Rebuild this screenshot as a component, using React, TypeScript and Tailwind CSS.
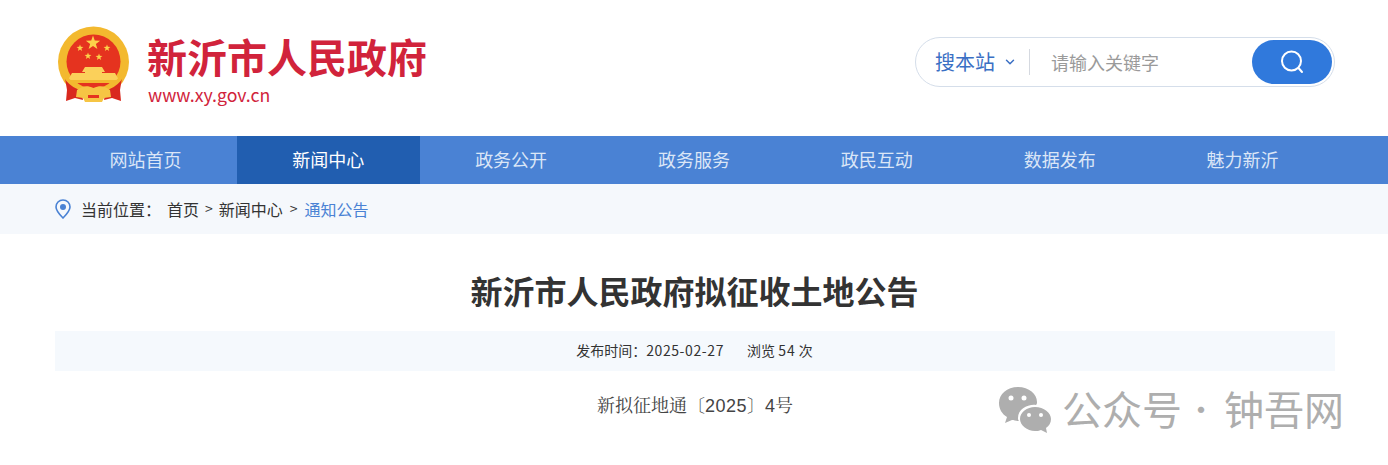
import { ChevronDown } from 'lucide-react';

const navItems = ['网站首页', '新闻中心', '政务公开', '政务服务', '政民互动', '数据发布', '魅力新沂'];

function Star({ cx, cy, r }: { cx: number; cy: number; r: number }) {
  const pts: string[] = [];
  for (let i = 0; i < 10; i++) {
    const rad = i % 2 === 0 ? r : r * 0.4;
    const a = (Math.PI / 5) * i - Math.PI / 2;
    pts.push(`${(cx + rad * Math.cos(a)).toFixed(2)},${(cy + rad * Math.sin(a)).toFixed(2)}`);
  }
  return <polygon points={pts.join(' ')} fill="#fcd24a" />;
}

function Emblem() {
  return (
    <svg width="74" height="77" viewBox="0 0 74 77" className="shrink-0">
      <circle cx="36.5" cy="36" r="35.5" fill="#f3b92f" />
      <circle cx="36.5" cy="35.5" r="27" fill="#e5331f" />
      <Star cx={36} cy={17} r={7.5} />
      <Star cx={23} cy={22} r={3.6} />
      <Star cx={50} cy={22} r={3.6} />
      <Star cx={31} cy={30} r={3.6} />
      <Star cx={42} cy={31} r={3.6} />
      {/* gate */}
      <path d="M28 41 L45 41 L48 46 L45 46 L45 47 L58 47 L62 54 L11 54 L15 47 L28 47 L28 46 L25 46 Z" fill="#fbd05a" />
      <path d="M11 54 L62 54 L60 57 L13 57 Z" fill="#f3b92f" />
      {/* ribbons */}
      <path d="M8 52 C12 57 17 61 24 63 L26 74 L18 72 L9 75 L10 64 Z" fill="#d9281e" />
      <path d="M65 52 C61 57 56 61 49 63 L47 74 L55 72 L64 75 L63 64 Z" fill="#d9281e" />
      {/* lower band and knot */}
      <path d="M8 50 C14 60 26 65 36.5 65 C47 65 59 60 65 50" fill="none" stroke="#f3b92f" strokeWidth="3.5" />
      <path d="M20 64 C25 60 30 59 36.5 62 C43 59 48 60 53 64 L54 71 L47 72 L45 76 L28 76 L26 72 L19 71 Z" fill="#f6c544" />
      <path d="M31 69 L42 69 L42 72 L31 72 Z" fill="#e5331f" />
    </svg>
  );
}

function WeChat() {
  return (
    <svg width="54" height="46" viewBox="0 0 54 46" className="shrink-0">
      <path d="M20 0 C31 0 39 7 39 15 C39 16 39 17 38 18 C30 17 20 22 20 31 C20 32 20 33 21 34 C18 34 16 33 14 33 L7 36 L9 30 C4 27 1 22 1 16 C1 7 9 0 20 0 Z" fill="#aeaeae" />
      <path d="M37 20 C46 20 53 26 53 32 C53 36 51 39 48 41 L49 46 L43 43 C41 44 39 44 37 44 C29 44 22 38 22 32 C22 25 29 20 37 20 Z" fill="#aeaeae" />
      <circle cx="13" cy="11" r="2.5" fill="#fff" />
      <circle cx="26" cy="11" r="2.5" fill="#fff" />
      <circle cx="31" cy="28" r="2" fill="#fff" />
      <circle cx="43" cy="28" r="2" fill="#fff" />
    </svg>
  );
}

export default function App() {
  return (
    <div className="relative h-[465px] overflow-hidden bg-white font-['Noto_Sans_CJK_SC','Noto_Sans',sans-serif]">
      <header className="ml-[55px] flex h-[136px] w-[1280px] items-start justify-between">
        <div className="flex items-start gap-[16px] pt-[26px] pl-[2px]">
          <Emblem />
          <div className="flex flex-col pt-[8px]">
            <span className="text-[40px] leading-[44px] font-bold text-[#d1233b]">新沂市人民政府</span>
            <span className="mt-[4px] pl-[1px] text-[17.7px] leading-[24px] text-[#d1233b]">www.xy.gov.cn</span>
          </div>
        </div>
        <div className="mt-[37px] flex h-[50px] w-[420px] items-center rounded-full border border-[#d5deea] pr-[2px] pl-[19px]">
          <span className="text-[20px] text-[#3a6fc4]">搜本站</span>
          <ChevronDown className="ml-[8px] text-[#3a6fc4]" size={14} strokeWidth={2.5} />
          <div className="ml-[12px] h-[26px] w-px bg-[#d5d9e0]" />
          <span className="ml-[21px] flex-1 text-[18px] text-[#9a9a9a]">请输入关键字</span>
          <div className="flex h-[44px] w-[80px] items-center justify-center rounded-full bg-[#3079dc]">
            <svg width="24" height="24" viewBox="0 0 24 24" fill="none" stroke="#fff" strokeWidth="2" strokeLinecap="round">
              <circle cx="11.5" cy="11" r="9.5" />
              <path d="M18.5 18 L22 22" />
            </svg>
          </div>
        </div>
      </header>

      <nav className="h-[48px] bg-[#4a82d4]">
        <div className="ml-[54px] grid h-full w-[1280px] grid-cols-7">
          {navItems.map((item, i) => (
            <div
              key={item}
              className={
                i === 1
                  ? 'flex items-center justify-center bg-[#215eb0] pb-[1px] text-[18px] text-white'
                  : 'flex items-center justify-center pb-[1px] text-[18px] text-[#dbe6f7]'
              }
            >
              {item}
            </div>
          ))}
        </div>
      </nav>

      <div className="h-[50px] bg-[#f5f8fc]">
        <div className="ml-[55px] flex h-full w-[1280px] items-center pb-[1px] text-[16px] text-[#333]">
          <svg width="16" height="20" viewBox="0 0 16 20" fill="none">
            <path d="M8 1 C4 1 1 4 1 8 C1 12 5 16 8 19 C11 16 15 12 15 8 C15 4 12 1 8 1 Z" stroke="#4a82d4" strokeWidth="1.6" />
            <circle cx="8" cy="8" r="3" fill="#4a82d4" />
          </svg>
          <span className="ml-[10px]">当前位置：</span>
          <span className="ml-[6px]">首页</span>
          <span className="mx-[6px] text-[14px]">&gt;</span>
          <span>新闻中心</span>
          <span className="mx-[7px] text-[14px]">&gt;</span>
          <span className="text-[#4a82d4]">通知公告</span>
        </div>
      </div>

      <main className="ml-[55px] w-[1280px]">
        <h1 className="pt-[33px] pr-[1px] pb-[17px] text-center text-[32px] leading-[47px] font-bold text-[#333]">
          新沂市人民政府拟征收土地公告
        </h1>
        <div className="flex h-[40px] items-center justify-center gap-[23px] bg-[#f5f9fd] pr-[1px] pb-[1px] text-[14px] text-[#333]">
          <span>
            发布时间：<span className="tracking-[0.6px]">2025-02-27</span>
          </span>
          <span>
            浏览 <span className="tracking-[1px]">54</span> 次
          </span>
        </div>
        <p className="pt-[20px] text-center font-['Liberation_Sans','Noto_Serif_CJK_SC',serif] text-[18px] leading-[30px] text-[#444]">
          新拟征地通〔<span className="tracking-[0.5px]">2025</span>〕4号
        </p>
      </main>

      <div className="absolute top-[385px] left-[998px] flex items-center text-[#aeaeae]">
        <WeChat />
        <div className="flex items-center pb-[4px] leading-[46px]">
          <span className="ml-[10px] text-[40px] whitespace-nowrap">公众号</span>
          <span className="w-[38px] text-center text-[30px]">·</span>
          <span className="ml-[4px] text-[40px] whitespace-nowrap">钟吾网</span>
        </div>
      </div>
    </div>
  );
}
